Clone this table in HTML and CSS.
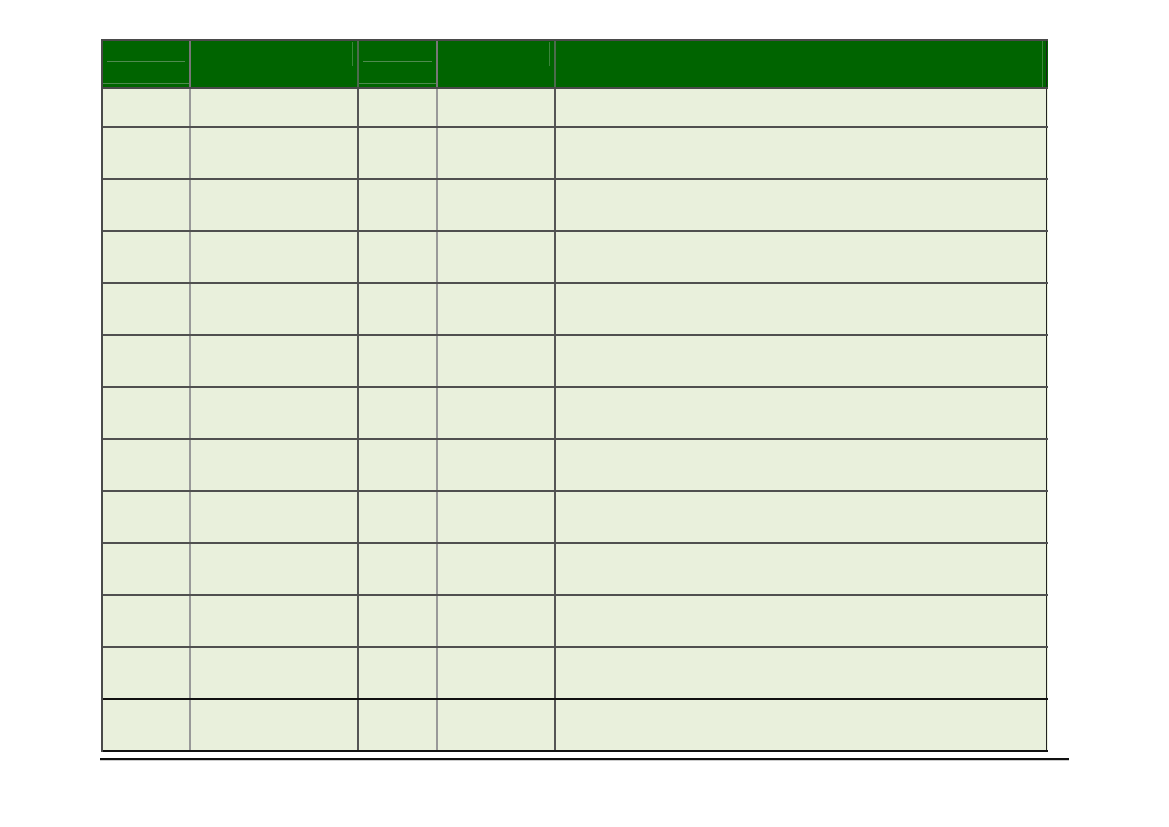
FILE: index.html
```html
<!DOCTYPE html>
<html>
<head>
<meta charset="utf-8">
<link rel="stylesheet" href="styles.css">
</head>
<body>
<div class="page">
  <div class="table">
    <div class="row head">
      <div class="cell c1"><div class="hl-a"></div><div class="hl-b"></div></div>
      <div class="cell c2"><div class="vl"></div></div>
      <div class="cell c3"><div class="hl-a"></div><div class="hl-b"></div></div>
      <div class="cell c4"><div class="vl"></div></div>
      <div class="cell c5"><div class="vl"></div></div>
    </div>
    <div class="row first"><div class="cell c1"></div><div class="cell c2"></div><div class="cell c3"></div><div class="cell c4"></div><div class="cell c5"></div></div>
    <div class="row"><div class="cell c1"></div><div class="cell c2"></div><div class="cell c3"></div><div class="cell c4"></div><div class="cell c5"></div></div>
    <div class="row"><div class="cell c1"></div><div class="cell c2"></div><div class="cell c3"></div><div class="cell c4"></div><div class="cell c5"></div></div>
    <div class="row"><div class="cell c1"></div><div class="cell c2"></div><div class="cell c3"></div><div class="cell c4"></div><div class="cell c5"></div></div>
    <div class="row"><div class="cell c1"></div><div class="cell c2"></div><div class="cell c3"></div><div class="cell c4"></div><div class="cell c5"></div></div>
    <div class="row"><div class="cell c1"></div><div class="cell c2"></div><div class="cell c3"></div><div class="cell c4"></div><div class="cell c5"></div></div>
    <div class="row"><div class="cell c1"></div><div class="cell c2"></div><div class="cell c3"></div><div class="cell c4"></div><div class="cell c5"></div></div>
    <div class="row"><div class="cell c1"></div><div class="cell c2"></div><div class="cell c3"></div><div class="cell c4"></div><div class="cell c5"></div></div>
    <div class="row"><div class="cell c1"></div><div class="cell c2"></div><div class="cell c3"></div><div class="cell c4"></div><div class="cell c5"></div></div>
    <div class="row"><div class="cell c1"></div><div class="cell c2"></div><div class="cell c3"></div><div class="cell c4"></div><div class="cell c5"></div></div>
    <div class="row"><div class="cell c1"></div><div class="cell c2"></div><div class="cell c3"></div><div class="cell c4"></div><div class="cell c5"></div></div>
    <div class="row dark"><div class="cell c1"></div><div class="cell c2"></div><div class="cell c3"></div><div class="cell c4"></div><div class="cell c5"></div></div>
    <div class="row dark"><div class="cell c1"></div><div class="cell c2"></div><div class="cell c3"></div><div class="cell c4"></div><div class="cell c5"></div></div>
  </div>
  <div class="rule"></div>
</div>
</body>
</html>
```
FILE: styles.css
```css
html, body {
  margin: 0;
  padding: 0;
  background: #ffffff;
  font-family: "Liberation Sans", Arial, sans-serif;
}

.page {
  padding: 39px 0 0 100px;
}

.table {
  margin-left: 1px;
  width: 947px;
  box-sizing: border-box;
  border-left: 2px solid #4a4a4a;
  border-top: 2px solid #4a4a4a;
}

.row {
  display: grid;
  grid-template-columns: 88px 168px 79px 118px 492px;
  height: 52px;
  box-sizing: border-box;
  border-bottom: 2px solid #505050;
  background: #e9f0dc;
}

.row.head {
  height: 48px;
  background: #006400;
  border-bottom: 2px solid #4a4a4a;
}

.row.first {
  height: 39px;
}

.row.dark {
  border-bottom-color: #111111;
}

.cell {
  box-sizing: border-box;
  border-right: 2px solid #555555;
  display: flex;
  flex-direction: column;
}

.cell.c1, .cell.c3 {
  border-right-color: #999999;
}

.cell.c5 {
  border-right: 1px solid #222222;
  width: 491px;
}

.head .cell {
  border-right-color: #4d6b4d;
}

.head .cell.c1, .head .cell.c3 {
  border-right-color: #777777;
}

.head .cell.c5 {
  border-right-color: #222222;
}

.hl-a {
  margin: 20px 4px 0 4px;
  height: 1px;
  background: #4f8a4f;
}

.hl-b {
  margin-top: 21px;
  height: 1px;
  background: #4f8a4f;
}

.head .vl {
  align-self: flex-end;
  width: 1px;
  height: 24px;
  margin: 1px 4px 0 0;
  background: #3c853c;
}

.head .c5 .vl {
  height: 46px;
  margin: 0 3px 0 0;
}

.rule {
  margin-top: 6px;
  width: 969px;
  height: 2px;
  background: #111111;
  border-bottom: 1px solid #cccccc;
}
```
